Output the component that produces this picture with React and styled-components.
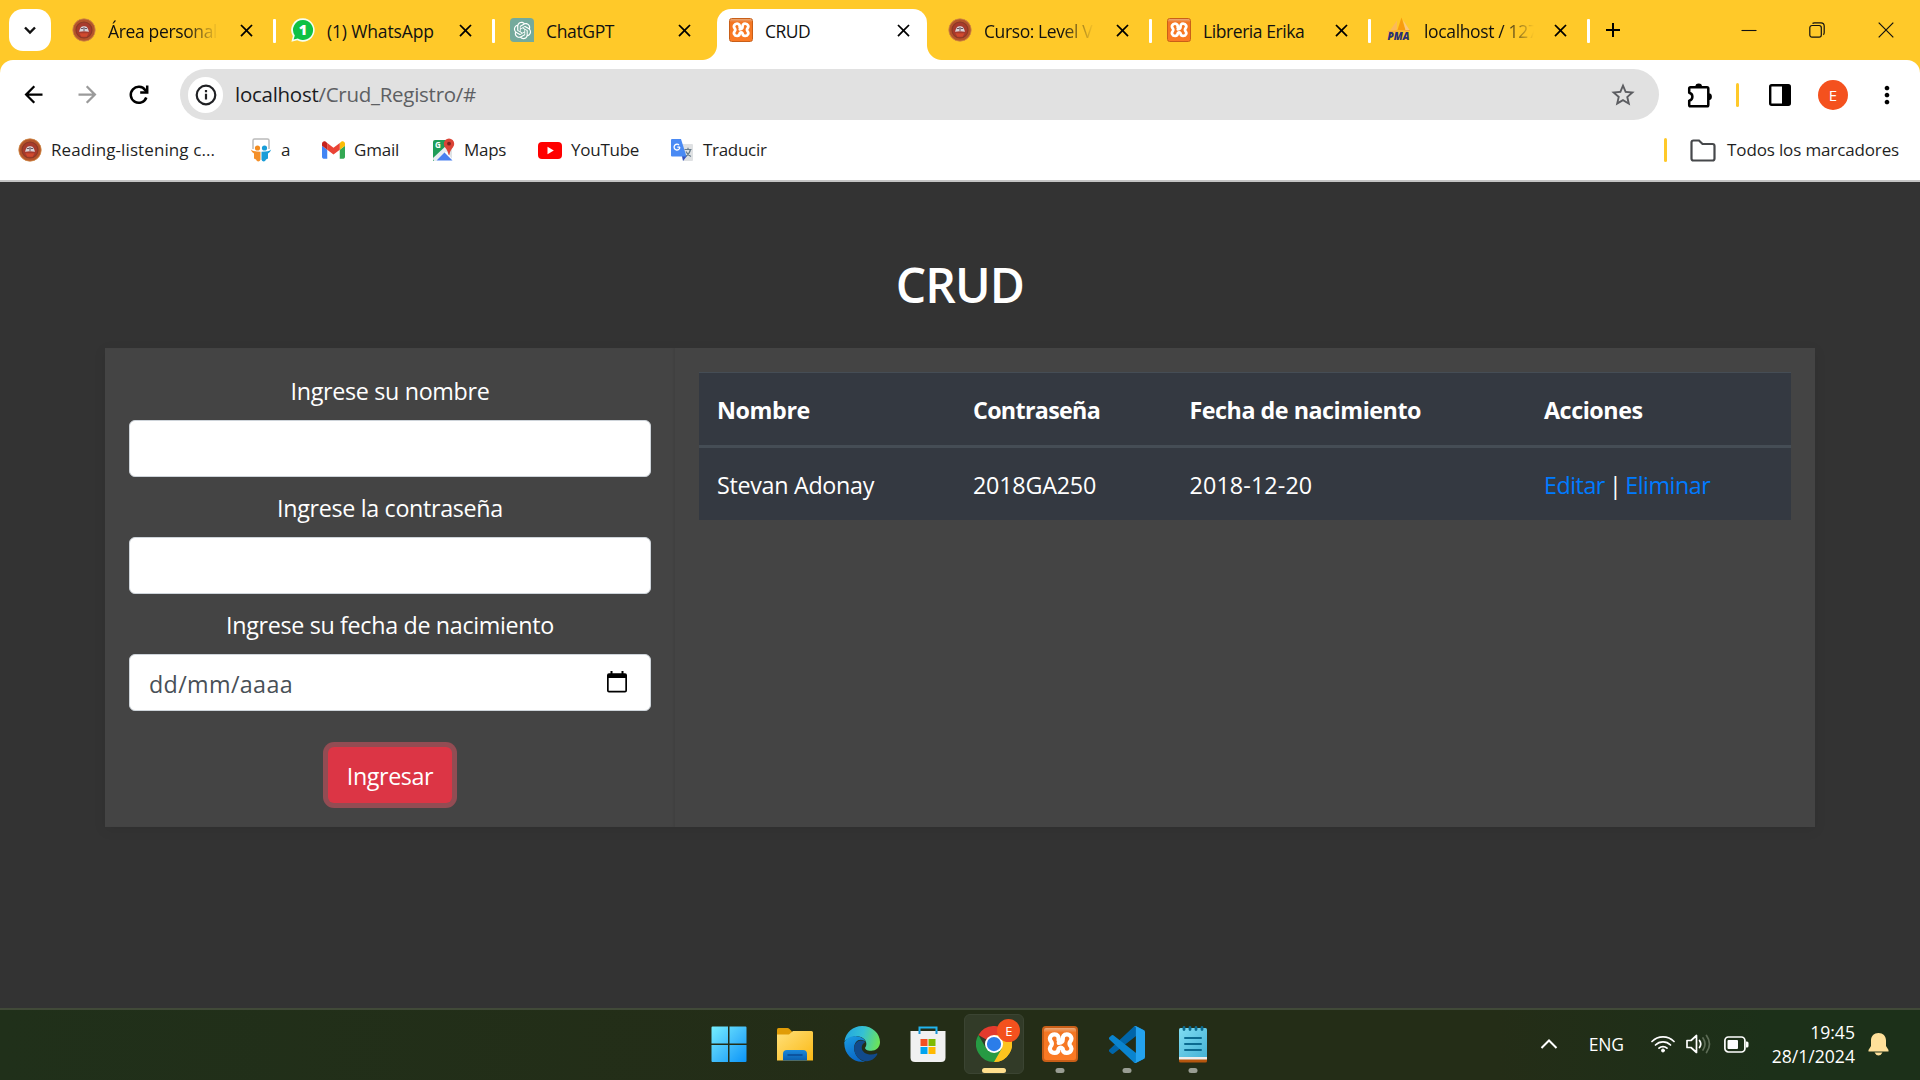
import React from "react";
import styled, { createGlobalStyle, css } from "styled-components";
import {
  MdArrowBack,
  MdArrowForward,
  MdStarBorder,
  MdMoreVert,
  MdClose,
  MdAdd,
} from "react-icons/md";
import { RiOpenaiFill } from "react-icons/ri";

const GlobalStyle = createGlobalStyle`
  *, *::before, *::after { box-sizing: border-box; }
  html, body { margin: 0; padding: 0; background: #333; overflow: hidden; }
  body { font-family: "Open Sans", "Noto Sans", sans-serif; }
  svg { display: block; flex: none; }
`;

const Screen = styled.div`
  width: 1920px;
  height: 1080px;
  display: flex;
  flex-direction: column;
  overflow: hidden;
`;

const Text = styled.span`
  display: block;
  white-space: nowrap;
  font-size: ${(p) => p.$size || 17}px;
  letter-spacing: ${(p) => p.$ls || 0}px;
`;

/* ---------- Tab strip ---------- */

const TabStrip = styled.div`
  height: 60px;
  flex: none;
  display: flex;
  align-items: flex-end;
  background: #ffc929;
  color: #111;
`;

const TabSearch = styled.div`
  width: 42px;
  height: 42px;
  margin: 0 9px 9px 9px;
  border-radius: 14px;
  background: #fff;
  display: flex;
  align-items: center;
  justify-content: center;
`;

const Tab = styled.div`
  position: relative;
  width: 210px;
  height: 51px;
  margin-right: 9px;
  padding: 0 12px 9px 12px;
  display: flex;
  align-items: center;
  flex: none;
  ${(p) =>
    p.$active &&
    css`
      background: #fff;
      border-radius: 14px 14px 0 0;
      &::before,
      &::after {
        content: "";
        position: absolute;
        bottom: 0;
        width: 15px;
        height: 15px;
      }
      &::before {
        left: -15px;
        background: radial-gradient(circle at 0 0, transparent 14.5px, #fff 15.5px);
      }
      &::after {
        right: -15px;
        background: radial-gradient(circle at 100% 0, transparent 14.5px, #fff 15.5px);
      }
    `}
  ${(p) =>
    p.$divided &&
    css`
      &::after {
        content: "";
        position: absolute;
        left: 213px;
        top: 10px;
        width: 3px;
        height: 24px;
        border-radius: 1px;
        background: #fff;
      }
    `}
`;

const TabTitle = styled.div`
  width: 111px;
  height: 28px;
  line-height: 26px;
  margin-left: 12px;
  padding-top: 2px;
  overflow: hidden;
  ${(p) => p.$fade && "mask-image: linear-gradient(90deg, #000 70%, transparent 99%);"}
`;

const TabClose = styled.div`
  margin-left: auto;
  width: 24px;
  display: flex;
  justify-content: center;
`;

const NewTab = styled.div`
  height: 42px;
  margin: 0 0 9px 8px;
  display: flex;
  align-items: center;
`;

const WindowControls = styled.div`
  margin-left: auto;
  height: 60px;
  display: flex;
  align-items: center;
`;

const WindowButton = styled.div`
  width: 68.5px;
  display: flex;
  justify-content: center;
`;

/* ---------- Toolbar ---------- */

const ToolbarShell = styled.div`
  height: 122px;
  flex: none;
  background: #ffc929;
`;

const ToolbarBody = styled.div`
  height: 122px;
  background: #fff;
  border-radius: 13px 13px 0 0;
  border-bottom: 2px solid #c4c4c4;
`;

const AddressRow = styled.div`
  height: 69px;
  display: flex;
  align-items: center;
  padding: 0 19px 0 20px;
`;

const NavButtons = styled.div`
  display: flex;
  align-items: center;
  gap: 27px;
  width: 160px;
  color: #000;
`;

const Omnibox = styled.div`
  width: 1479px;
  height: 51px;
  border-radius: 26px;
  background: #e1e1e1;
  display: flex;
  align-items: center;
  padding: 0 22px 0 8px;
`;

const SiteInfo = styled.div`
  width: 35px;
  height: 36px;
  border-radius: 18px;
  background: #fff;
  display: flex;
  align-items: center;
  justify-content: center;
`;

const Url = styled.div`
  display: flex;
  margin-left: 12px;
  padding-bottom: 2px;
  color: #1b1c1f;
`;

const UrlPath = styled.span`
  color: #5d5f63;
`;

const StarSlot = styled.div`
  margin-left: auto;
  color: #5c5d61;
`;

const ToolbarActions = styled.div`
  margin-left: auto;
  display: flex;
  align-items: center;
`;

const YellowRule = styled.div`
  width: 3px;
  height: 24px;
  border-radius: 1.5px;
  background: #ffc929;
  margin: 0 ${(p) => p.$right}px 0 ${(p) => p.$left || 0}px;
`;

const Avatar = styled.div`
  width: ${(p) => p.$d}px;
  height: ${(p) => p.$d}px;
  border-radius: 50%;
  background: #f4511e;
  color: #fff;
  font-size: ${(p) => p.$font}px;
  display: flex;
  align-items: center;
  justify-content: center;
`;

const AvatarSlot = styled.div`
  margin: 0 25px 0 27px;
`;

const BookmarkRow = styled.div`
  height: 42px;
  display: flex;
  align-items: center;
  padding: 0 21px 0 18px;
  color: #1f1f1f;
`;

const Bookmark = styled.div`
  display: flex;
  align-items: center;
  gap: ${(p) => p.$gap || 9}px;
  width: ${(p) => (p.$w ? `${p.$w}px` : "auto")};
  ${Text} {
    padding-bottom: 2px;
  }
`;

const BookmarksEnd = styled.div`
  margin-left: auto;
  display: flex;
  align-items: center;
`;

/* ---------- Page ---------- */

const Page = styled.main`
  height: 826px;
  flex: none;
  background: #333;
  color: #fff;
  display: flex;
  flex-direction: column;
  align-items: center;
`;

const Heading = styled.h1`
  margin: 72px 0 36px;
  height: 58px;
  line-height: 58px;
  padding-top: 2px;
  font-size: 48px;
  font-weight: 600;
  letter-spacing: -0.9px;
`;

const Card = styled.section`
  width: 1710px;
  height: 479px;
  display: flex;
  background: #444;
  box-shadow: 0 3px 12px rgba(0, 0, 0, 0.08);
`;

const FormColumn = styled.form`
  width: 570px;
  padding: 24px;
  display: flex;
  flex-direction: column;
  box-shadow: inset -2px 0 2px rgba(0, 0, 0, 0.05);
`;

const Label = styled.label`
  height: 36px;
  line-height: 36px;
  padding-top: 1px;
  margin-bottom: 12px;
  text-align: center;
  font-size: 23.3px;
  letter-spacing: -0.33px;
`;

const Field = styled.div`
  height: 57px;
  margin-bottom: 12px;
  padding: 2px 21px 0 19px;
  border: 1px solid #ced4da;
  border-radius: 6px;
  background: #fff;
  color: #495057;
  display: flex;
  justify-content: space-between;
  align-items: center;
`;

const CalendarSlot = styled.div`
  padding: 0 2px 3px 0;
`;

const Submit = styled.button`
  width: 124px;
  height: 56px;
  margin: 24px auto 0;
  padding: 1px 0 0;
  border: 0;
  border-radius: 6px;
  background: #dc3545;
  box-shadow: 0 0 0 5px rgba(225, 83, 97, 0.5);
  color: #fff;
  font: 23.3px "Open Sans", sans-serif;
  letter-spacing: -0.42px;
`;

const TableColumn = styled.div`
  width: 1140px;
  padding: 24px;
`;

const Table = styled.div`
  display: flex;
  flex-direction: column;
  background: #343a40;
  border-top: 1px solid #454d55;
`;

const Row = styled.div`
  display: grid;
  grid-template-columns: 256px 216.5px 354.5px 1fr;
  height: ${(p) => (p.$head ? 75 : 72)}px;
  background: #343941;
  border-bottom: ${(p) => (p.$head ? "3px solid #454d55" : "0")};
  font-weight: ${(p) => (p.$head ? 700 : 400)};
`;

const Cell = styled.div`
  padding: 19px 0 0 18px;
  line-height: 36px;
  font-size: 23.3px;
  letter-spacing: ${(p) => p.$ls}px;
  word-spacing: ${(p) => p.$ws || 0}px;
  white-space: pre;
`;

const Link = styled.span`
  color: #007bff;
`;

/* ---------- Taskbar ---------- */

const Taskbar = styled.footer`
  height: 72px;
  flex: none;
  display: grid;
  grid-template-columns: 696px 530px 1fr;
  border-top: 2px solid #414a38;
  background: linear-gradient(90deg, #20301a 0%, #242d17 45%, #242d17 78%, #1c3019 92%, #1c3019 100%);
  color: #fff;
`;

const Apps = styled.div`
  grid-column: 2;
  display: flex;
`;

const AppSlot = styled.div`
  position: relative;
  width: 66.25px;
  height: 68px;
  display: flex;
  align-items: center;
  justify-content: center;
`;

const AppTile = styled.div`
  width: 60px;
  height: 60px;
  border-radius: 6px;
  display: flex;
  align-items: center;
  justify-content: center;
  ${(p) =>
    p.$active &&
    css`
      background: #323b28;
      border: 1px solid #3b4432;
    `}
`;

const Indicator = styled.div`
  position: absolute;
  left: 50%;
  bottom: 5px;
  width: ${(p) => (p.$active ? 24 : 9)}px;
  height: 5px;
  transform: translateX(-50%);
  border-radius: 3px;
  background: ${(p) => (p.$active ? "#ffdf8e" : "#999d93")};
`;

const BadgeSlot = styled.div`
  position: absolute;
  right: 7px;
  top: 9px;
`;

const Tray = styled.div`
  grid-column: 3;
  display: flex;
  align-items: center;
  justify-content: flex-end;
  padding: 0 31px 2px 0;
`;

const TraySpace = styled.div`
  display: flex;
  margin-right: ${(p) => p.$r}px;
`;

const Clock = styled.div`
  display: flex;
  flex-direction: column;
  align-items: flex-end;
  line-height: 24px;
  margin-right: 13px;
`;

/* ---------- Icons ---------- */

const School = () => (
  <svg width="24" height="24" viewBox="0 0 24 24">
    <circle cx="12" cy="12" r="11.2" fill="#b5542b" stroke="#cf8a45" strokeWidth=".8" />
    <circle cx="12" cy="12" r="8" fill="#a83a2c" stroke="#8c3a26" strokeWidth="1.2" />
    <path d="M7 13.800L8.200 10.200Q9.500 7.800 12 8.300Q14.500 7.800 15.800 10.200L17 13.800L12 13.200z" fill="#d9d3d8" />
    <path d="M8.800 10.500h2.600M12.600 10.500h2.600M12 9v4" stroke="#6b5560" strokeWidth="1" />
    <path d="M7.500 15.200h9l-1.800 3.500H9.300z" fill="#cf4a2e" />
  </svg>
);

const WhatsApp = () => (
  <svg width="24" height="24" viewBox="0 0 24 24">
    <path d="M12 0.300a11.700 11.700 0 1 1-5.800 21.900L.4 23.700l1.500-5.600A11.700 11.700 0 0 1 12 .3z" fill="#f4fff2" />
    <path d="M12 2a10 10 0 1 1-5.200 18.500L2.600 21.500l1.200-3.900A10 10 0 0 1 12 2z" fill="#0fc143" />
    <text x="12" y="17" textAnchor="middle" fontFamily="Open Sans, sans-serif" fontWeight="800" fontSize="14.500" fill="#fff">1</text>
  </svg>
);

const GptTile = styled.div`
  width: 24px;
  height: 24px;
  border-radius: 4px 4px 0 4px;
  background: #74aa9c;
  color: #fff;
  display: flex;
  align-items: center;
  justify-content: center;
`;

const XamppTile = styled.div`
  width: ${(p) => p.$d}px;
  height: ${(p) => p.$d}px;
  border-radius: ${(p) => p.$d / 9}px;
  border: ${(p) => (p.$d > 30 ? 2 : 1)}px solid #c95f18;
  background: linear-gradient(#e9aa7c 0, #f37623 14%, #fb7a24 100%);
  display: flex;
  align-items: center;
  justify-content: center;
`;

const Xampp = ({ d = 24 }) => (
  <XamppTile $d={d}>
    <svg
      width={d * 0.76}
      height={d * 0.65}
      viewBox="0 0 28 24"
      fill="none"
      stroke="#fff"
      strokeWidth="4.3"
      strokeLinejoin="round"
      strokeLinecap="round"
    >
      <path d="M11.800 8.300C12.300 4.500 10.500 2.500 7.800 2.500C3.500 2.500 1.500 7 4.300 10Q5.600 12 4.300 14C1.500 17 3.500 21.500 7.800 21.500C10.500 21.500 11.800 19.500 11.900 17.300Q14 14.600 16.100 17.300C16.200 19.500 17.500 21.500 20.200 21.500C24.500 21.500 26.500 17 23.700 14Q22.400 12 23.700 10C26.500 7 24.500 2.500 20.200 2.500C17.200 2.500 16 4.500 16.200 7.500Q16.200 10.800 12 11.300" />
    </svg>
  </XamppTile>
);

const Pma = () => (
  <svg width="26" height="26" viewBox="0 0 26 26">
    <path d="M11.500 13L15.500 0.500l4 12.500z" fill="#f89c0e" />
    <path d="M4 13.500L11 3.500 10.700 13z" fill="#fbb95c" />
    <path d="M17 3l6.500 10h-4z" fill="#fcc77d" />
    <path d="M2 14.500l22-1" stroke="#f2a33d" strokeWidth="1" />
    <text x="12.500" y="23" textAnchor="middle" textLength="22" lengthAdjust="spacingAndGlyphs" fontFamily="Open Sans, sans-serif" fontWeight="800" fontStyle="italic" fontSize="10" fill="#2b2f74">PMA</text>
  </svg>
);

const Chevron = () => (
  <svg width="16" height="16" viewBox="0 0 16 16" fill="none" stroke="#111" strokeWidth="2.400">
    <path d="M3 5.500l5 5 5-5" />
  </svg>
);

const Reload = () => (
  <svg width="22" height="22" viewBox="0 0 22 22" fill="none" stroke="#000" strokeWidth="2.500">
    <path d="M18.300 13.500A8 8 0 1 1 17.300 6.200L19 8" />
    <path d="M19.200 1.500v7h-7" />
  </svg>
);

const Puzzle = () => (
  <svg width="28" height="28" viewBox="0 0 28 28">
    <path
      d="M5.500 6.200H22Q23.300 6.200 23.300 7.500V24Q23.300 25.300 22 25.300H5.500Q4.200 25.300 4.200 24V19.600Q7.400 18.800 7.400 15.700Q7.400 12.600 4.200 11.800V7.500Q4.200 6.200 5.500 6.200z"
      fill="none"
      stroke="#000"
      strokeWidth="2.500"
      strokeLinejoin="round"
    />
    <path d="M10.300 6a3.400 3.400 0 0 1 6.800 0zM23.500 12.300a3.400 3.400 0 0 1 0 6.800z" />
  </svg>
);

const Info = () => (
  <svg width="22" height="22" viewBox="0 0 22 22" fill="none" stroke="#202124" strokeWidth="2.200">
    <circle cx="11" cy="11" r="9.300" />
    <path d="M11 9.800v5.700M11 6v2.200" />
  </svg>
);

const SidePanel = () => (
  <svg width="22" height="22" viewBox="0 0 22 22">
    <rect x="1.200" y="1.200" width="19.600" height="19.600" rx="1.500" fill="#fff" stroke="#000" strokeWidth="2.400" />
    <path d="M13 1h8v20h-8z" />
  </svg>
);

const Slides = () => (
  <svg width="22" height="24" viewBox="0 0 22 24">
    <path d="M3 11V2.500Q3 1 4.500 1H17.500Q19 1 19 2.500V11" fill="#fff" stroke="#bbb" strokeWidth="1.500" />
    <circle cx="7.500" cy="10" r="2.600" fill="#f38b1e" />
    <circle cx="14.500" cy="10" r="2.600" fill="#189dd8" />
    <path d="M.8 11.500q2 2.200 9.700 2.200v8q-.6 1.800-2.200 1.800T6 21.500l-2-1V15.500Q1.500 14 .8 11.500z" fill="#f4902a" />
    <path d="M21.200 11.500q-2 2.200-9.700 2.200v8q.6 1.800 2.200 1.800T16 21.500l2-1V15.500q2.500-1.500 3.200-4z" fill="#189dd8" />
  </svg>
);

const Gmail = () => (
  <svg width="23" height="18" viewBox="52 42 88 66">
    <path fill="#4285f4" d="M58 108h14V74L52 59v43c0 3.320 2.690 6 6 6" />
    <path fill="#34a853" d="M120 108h14c3.320 0 6-2.690 6-6V59l-20 15" />
    <path fill="#fbbc04" d="M120 48v26l20-15v-8c0-7.420-8.470-11.650-14.400-7.200" />
    <path fill="#ea4335" d="M72 74V48l24 18 24-18v26L96 92" />
    <path fill="#c5221f" d="M52 51v8l20 15V48l-5.600-4.200c-5.940-4.450-14.400-.22-14.400 7.200" />
  </svg>
);

const Maps = () => (
  <svg width="24" height="24" viewBox="0 0 24 24">
    <path d="M1 4q0-2 2-2h12v10L3 23H1z" fill="#1f9d58" />
    <path d="M1 20L17 5l3 3L4 23H2q-1 0-1-3z" fill="#e9edf2" />
    <path d="M4.500 22.500l8-8 8 8z" fill="#4a80f0" />
    <path d="M14 13l6-6v14z" fill="#dfe3e6" />
    <text x="3" y="10" fontFamily="Open Sans, sans-serif" fontWeight="700" fontSize="8" fill="#fff">G</text>
    <path d="M17 .5a5.200 5.200 0 0 1 5.200 5.200c0 4-4.200 5.300-4.700 11h-1c-.5-5.700-4.700-7-4.700-11A5.200 5.200 0 0 1 17 .5z" fill="#db4437" />
    <circle cx="17" cy="5.700" r="1.900" fill="#7b231e" />
  </svg>
);

const YouTube = () => (
  <svg width="24" height="17" viewBox="0 0 24 17">
    <rect width="24" height="17" rx="4" fill="#f00" />
    <path d="M9.500 4.800v7.400l6.300-3.700z" fill="#fff" />
  </svg>
);

const Translate = () => (
  <svg width="24" height="24" viewBox="0 0 24 24">
    <path d="M9 6h13q1 0 1 1v15q0 1-1 1H13z" fill="#dfe1e3" />
    <path d="M12 18h5l-4 5z" fill="#3753bd" />
    <path d="M2 1h9l5.500 17.500H2Q1 18.500 1 17.500V2Q1 1 2 1z" fill="#4a8af4" />
    <path d="M10 9.200H7.300M9.900 9.300A2.900 2.900 0 1 1 9 7" fill="none" stroke="#fff" strokeWidth="1.300" />
    <path d="M14.500 11.500h7M18 9.800v1.700M20.500 11.500q-1 4.500-4.500 6.500M16 13.500q1.500 3.500 5 5" fill="none" stroke="#667b8a" strokeWidth="1.200" />
  </svg>
);

const Folder = () => (
  <svg width="26" height="23" viewBox="0 0 26 23" fill="none" stroke="#46484b" strokeWidth="2.200">
    <path d="M1.500 19.500V3.500q0-2 2-2h5.500l3.500 3.500h10q2 0 2 2v12.500q0 2-2 2h-19q-2 0-2-2z" />
  </svg>
);

const Calendar = () => (
  <svg width="20" height="22" viewBox="0 0 20 22">
    <path d="M3.500 0h2v2.200h9V0h2v2.200H18q2 0 2 2V19.500q0 2-2 2H2q-2 0-2-2V4.200q0-2 2-2h1.500zM1.700 7v12.800h16.600V7z" fill="#000" fillRule="evenodd" />
  </svg>
);

const Minimize = () => (
  <svg width="16" height="16" viewBox="0 0 16 16"><path d="M.5 8.500h15" stroke="#111" strokeWidth="1.100" /></svg>
);
const Restore = () => (
  <svg width="16" height="16" viewBox="0 0 16 16" fill="none" stroke="#111" strokeWidth="1.200">
    <rect x=".8" y="3.500" width="11.500" height="11.700" rx="2.200" />
    <path d="M3.500 1.500Q4.200.8 5.500.8h6.500q3.200 0 3.200 3.200v6.500q0 1.500-.8 2.200" />
  </svg>
);
const CloseWindow = () => (
  <svg width="16" height="16" viewBox="0 0 16 16" stroke="#111" strokeWidth="1.200"><path d="M.7.7l14.600 14.600M15.300.7L.7 15.300" /></svg>
);

const Windows = () => (
  <svg width="36" height="36" viewBox="0 0 36 36">
    <defs>
      <linearGradient id="win" x1="0" y1="0" x2="1" y2="1">
        <stop offset="0" stopColor="#75efff" />
        <stop offset=".5" stopColor="#44bffb" />
        <stop offset="1" stopColor="#0b95f8" />
      </linearGradient>
    </defs>
    <path fill="url(#win)" d="M1.500.5H17v17H.5v-16q0-1 1-1zM18.500.5h16q1 0 1 1v16h-17zM.5 19H17v17H1.500q-1 0-1-1zM18.500 19h17v16q0 1-1 1h-16z" />
  </svg>
);

const Explorer = () => (
  <svg width="36" height="36" viewBox="0 0 36 36">
    <defs>
      <linearGradient id="fold" x1="0" y1="0" x2="1" y2="1">
        <stop offset="0" stopColor="#ffe07a" />
        <stop offset="1" stopColor="#fbb914" />
      </linearGradient>
      <linearGradient id="drawer" x1="0" y1="0" x2="0" y2="1">
        <stop offset="0" stopColor="#1a88dc" />
        <stop offset="1" stopColor="#0c5fae" />
      </linearGradient>
    </defs>
    <path d="M0 3.500Q0 2 1.500 2h9q1 0 2 1l2.500 2.500v4H0z" fill="#e09c07" />
    <path d="M0 8.500h12L16 5h18.500Q36 5 36 6.500V34.500H0z" fill="url(#fold)" />
    <path d="M6 34.500V28q0-4 4-4h16q4 0 4 4v6.500z" fill="url(#drawer)" />
    <path d="M11 29h14" stroke="#0a4a93" strokeWidth="1.500" strokeLinecap="round" />
  </svg>
);

const Edge = () => (
  <svg width="36" height="36" viewBox="0 0 256 256">
    <defs>
      <linearGradient id="edgeA" x1="0" y1=".3" x2="1" y2=".5">
        <stop offset="0" stopColor="#22a5e0" />
        <stop offset=".5" stopColor="#35c1d4" />
        <stop offset="1" stopColor="#6be35a" />
      </linearGradient>
      <linearGradient id="edgeB" x1="0" y1="0" x2=".4" y2="1">
        <stop offset="0" stopColor="#1b9de2" />
        <stop offset="1" stopColor="#0a68c8" />
      </linearGradient>
    </defs>
    <path d="M3 108C14 45 64 0 128 0c76 0 128 55 128 114 0 40-30 62-62 62-35 0-44-13-44-20 0-6 9-9 9-28 0-28-28-55-66-55C55 73 20 93 3 108z" fill="url(#edgeA)" />
    <path d="M2 116C14 91 50 70 88 72c34 1 60 20 69 46-9-14-24-20-38-20-26 0-47 25-47 58 0 50 40 91 78 97C72 266 0 210 2 116z" fill="url(#edgeB)" />
    <path d="M151 116c-19-24-79-14-79 44 0 55 56 105 115 86 24-9 43-30 50-46 2-4-2-7-6-5-48 20-105 0-105-42 0-15 9-29 25-37z" fill="#114a8b" />
  </svg>
);

const Store = () => (
  <svg width="36" height="36" viewBox="0 0 36 36">
    <path d="M9.500 9V1.500h17V9" fill="none" stroke="#20b4ee" strokeWidth="2" />
    <path d="M.5 5h35v26.500q0 4.500-4.500 4.500H5Q.5 36 .5 31.500z" fill="#f1f1f1" />
    <path d="M9.500 5v3M26.500 5v3" stroke="#1593d6" strokeWidth="2" />
    <path d="M10.500 13h7v7h-7z" fill="#f25022" />
    <path d="M18.500 13h7v7h-7z" fill="#7fba00" />
    <path d="M10.500 21h7v7h-7z" fill="#00a4ef" />
    <path d="M18.500 21h7v7h-7z" fill="#ffb900" />
  </svg>
);

const Chrome = () => (
  <svg width="36" height="36" viewBox="0 0 48 48">
    <path d="M24 24L3.200 12A24 24 0 0 1 44.800 12z" fill="#e33b2e" />
    <path d="M24 24l20.800-12A24 24 0 0 1 24 48z" fill="#fcc31e" />
    <path d="M24 12h20.800A24 24 0 0 1 24 48l10.400-18z" fill="#fcc31e" />
    <path d="M24 48A24 24 0 0 1 3.200 12L13.600 30 24 36l10.400-6z" fill="#269a43" />
    <circle cx="24" cy="24" r="12" fill="#fff" />
    <circle cx="24" cy="24" r="9.500" fill="#2b7de9" />
  </svg>
);

const VsCode = () => (
  <svg width="36" height="37" viewBox="0 0 100 100" preserveAspectRatio="none">
    <path d="M96 11L75.500 1a6 6 0 0 0-7 1.200L1.300 63.500a4 4 0 0 0 0 6l5.500 5a4 4 0 0 0 5.300.2L93 13.400c3-2 7 0 7 3.300v-.3a6 6 0 0 0-4-5.400z" fill="#0065a9" />
    <path d="M96 89L75.500 99a6 6 0 0 1-7-1.200L1.300 36.500a4 4 0 0 1 0-6l5.500-5a4 4 0 0 1 5.300-.2L93 86.600c3 2 7 0 7-3.300v.3a6 6 0 0 1-4 5.400z" fill="#0a84cf" />
    <path d="M75.500 99a6 6 0 0 1-7-1.200c2.300 2.300 6.200.7 6.200-2.600V4.800c0-3.300-4-4.900-6.200-2.600a6 6 0 0 1 7-1.200L96 10.900a6 6 0 0 1 4 5.600v67a6 6 0 0 1-4 5.600z" fill="#24a2ee" />
  </svg>
);

const Notepad = () => (
  <svg width="28" height="37" viewBox="0 0 28 37">
    <defs>
      <linearGradient id="note" x1="0" y1="0" x2="1" y2="1">
        <stop offset="0" stopColor="#7fdcf2" />
        <stop offset="1" stopColor="#45b2d6" />
      </linearGradient>
    </defs>
    <path d="M0 31h28v4q0 1.500-1.500 1.500h-25Q0 36.500 0 35z" fill="#b5560e" />
    <path d="M0 29h28v4.500H0z" fill="#ededed" />
    <path d="M0 3.500Q0 2 1.500 2h25Q28 2 28 3.500V31H0z" fill="url(#note)" />
    <path d="M5 1.500v2M11 1.500v2M17 1.500v2M23 1.500v2" stroke="#0d6a8e" strokeWidth="2.800" strokeLinecap="round" />
    <path d="M6 12h16M6 18h16M6 24h16" stroke="#0b6a90" strokeWidth="2" strokeLinecap="round" />
  </svg>
);

const TrayChevron = () => (
  <svg width="18" height="12" viewBox="0 0 18 12" fill="none" stroke="#fff" strokeWidth="2"><path d="M1.500 10L9 2.500l7.500 7.500" /></svg>
);
const Wifi = () => (
  <svg width="24" height="18" viewBox="0 0 24 18" fill="none" stroke="#fff" strokeWidth="1.700" strokeLinecap="round">
    <path d="M1 6.500a15.500 15.500 0 0 1 22 0M4.500 10a10.600 10.600 0 0 1 15 0M8 13.200a5.700 5.700 0 0 1 8 0" />
    <circle cx="12" cy="15.500" r="1.500" fill="#fff" strokeWidth="1" />
  </svg>
);
const Volume = () => (
  <svg width="25" height="20" viewBox="0 0 25 20" fill="none" stroke="#fff" strokeWidth="1.700" strokeLinejoin="round" strokeLinecap="round">
    <path d="M1 6.500h4l5.500-5v17l-5.500-5H1z" />
    <path d="M13.500 6.500q2.500 3.500 0 7" />
    <path d="M17 4q4 6 0 12M20.500 1.500q6 8.500 0 17" stroke="#5d6c56" />
  </svg>
);
const Battery = () => (
  <svg width="25" height="17" viewBox="0 0 25 17">
    <rect x=".9" y="1" width="20" height="15" rx="3.500" fill="none" stroke="#fff" strokeWidth="1.700" />
    <rect x="3.500" y="4" width="10.500" height="9" rx="1" fill="#fff" />
    <path d="M22 5.500h1q1.500 0 1.500 1.500v3q0 1.500-1.500 1.500h-1z" fill="#fff" />
  </svg>
);
const Bell = () => (
  <svg width="21" height="24" viewBox="0 0 21 24" fill="#ffe09a">
    <path d="M10.500 1c4.500 0 7.500 3 7.500 7.500v5.500l2.500 4v1.500H.5V18l2.500-4V8.500C3 4 6 1 10.500 1zM6.500 20.500h8q-1.500 3-4 3t-4-3z" />
  </svg>
);

/* ---------- Data ---------- */

const TABS = [
  { title: "Área personal", icon: <School />, divided: true, fade: true, ls: -0.35 },
  { title: "(1) WhatsApp", icon: <WhatsApp />, divided: true, ls: -0.15 },
  { title: "ChatGPT", icon: <GptTile><RiOpenaiFill size={21} /></GptTile>, ls: -0.35 },
  { title: "CRUD", icon: <Xampp />, active: true, ls: -0.5 },
  { title: "Curso: Level VI", icon: <School />, divided: true, fade: true, ls: -0.4 },
  { title: "Libreria Erika", icon: <Xampp />, divided: true, ls: -0.42 },
  { title: "localhost / 127", icon: <Pma />, divided: true, fade: true, ls: -0.35 },
];

const BOOKMARKS = [
  { title: "Reading-listening c...", icon: <School />, w: 232, gap: 9, ls: 0.1 },
  { title: "a", icon: <Slides />, w: 72 },
  { title: "Gmail", icon: <Gmail />, w: 110, ls: -0.2 },
  { title: "Maps", icon: <Maps />, w: 106, gap: 8, ls: -0.3 },
  { title: "YouTube", icon: <YouTube />, w: 132, ls: -0.25 },
  { title: "Traducir", icon: <Translate />, ls: -0.3 },
];

const FIELDS = ["Ingrese su nombre", "Ingrese la contraseña", "Ingrese su fecha de nacimiento"];

const APPS = [
  { name: "windows", icon: <Windows /> },
  { name: "explorer", icon: <Explorer /> },
  { name: "edge", icon: <Edge /> },
  { name: "store", icon: <Store /> },
  { name: "chrome", icon: <Chrome />, active: true, open: true },
  { name: "xampp", icon: <Xampp d={36} />, open: true },
  { name: "vscode", icon: <VsCode />, open: true },
  { name: "notepad", icon: <Notepad />, open: true },
];

export default function App() {
  return (
    <Screen>
      <GlobalStyle />
      <TabStrip>
        <TabSearch><Chevron /></TabSearch>
        {TABS.map((t) => (
          <Tab key={t.title} $active={t.active} $divided={t.divided}>
            {t.icon}
            <TabTitle $fade={t.fade}><Text $size={17.5} $ls={t.ls}>{t.title}</Text></TabTitle>
            <TabClose><MdClose size={21} color="#000" /></TabClose>
          </Tab>
        ))}
        <NewTab><MdAdd size={24} color="#000" /></NewTab>
        <WindowControls>
          <WindowButton><Minimize /></WindowButton>
          <WindowButton><Restore /></WindowButton>
          <WindowButton><CloseWindow /></WindowButton>
        </WindowControls>
      </TabStrip>

      <ToolbarShell>
        <ToolbarBody>
          <AddressRow>
            <NavButtons>
              <MdArrowBack size={27} />
              <MdArrowForward size={27} color="#9a9a9a" />
              <Reload />
            </NavButtons>
            <Omnibox>
              <SiteInfo><Info /></SiteInfo>
              <Url>
                <Text $size={20.5} $ls={-0.27}>localhost<UrlPath>/Crud_Registro/#</UrlPath></Text>
              </Url>
              <StarSlot><MdStarBorder size={28} /></StarSlot>
            </Omnibox>
            <ToolbarActions>
              <Puzzle />
              <YellowRule $left={23} $right={30} />
              <SidePanel />
              <AvatarSlot><Avatar $d={30} $font={15}>E</Avatar></AvatarSlot>
              <MdMoreVert size={28} />
            </ToolbarActions>
          </AddressRow>
          <BookmarkRow>
            {BOOKMARKS.map((b) => (
              <Bookmark key={b.title} $w={b.w} $gap={b.gap}>
                {b.icon}
                <Text $ls={b.ls}>{b.title}</Text>
              </Bookmark>
            ))}
            <BookmarksEnd>
              <YellowRule $right={23} />
              <Bookmark $gap={11}>
                <Folder />
                <Text $ls={-0.14}>Todos los marcadores</Text>
              </Bookmark>
            </BookmarksEnd>
          </BookmarkRow>
        </ToolbarBody>
      </ToolbarShell>

      <Page>
        <Heading>CRUD</Heading>
        <Card>
          <FormColumn>
            {FIELDS.map((label, i) => (
              <React.Fragment key={label}>
                <Label>{label}</Label>
                <Field>
                  {i === 2 && (
                    <>
                      <Text $size={23.3} $ls={0.35}>dd/mm/aaaa</Text>
                      <CalendarSlot><Calendar /></CalendarSlot>
                    </>
                  )}
                </Field>
              </React.Fragment>
            ))}
            <Submit type="button">Ingresar</Submit>
          </FormColumn>
          <TableColumn>
            <Table>
              <Row $head>
                <Cell $ls={-0.4}>Nombre</Cell>
                <Cell $ls={-0.7}>Contraseña</Cell>
                <Cell $ls={-0.48}>Fecha de nacimiento</Cell>
                <Cell $ls={-0.45}>Acciones</Cell>
              </Row>
              <Row>
                <Cell $ls={-0.3}>Stevan Adonay</Cell>
                <Cell $ls={-0.2}>2018GA250</Cell>
                <Cell $ls={0.12}>2018-12-20</Cell>
                <Cell $ls={-0.5} $ws={-1.5}><Link>Editar</Link> | <Link>Eliminar</Link></Cell>
              </Row>
            </Table>
          </TableColumn>
        </Card>
      </Page>

      <Taskbar>
        <Apps>
          {APPS.map((a) => (
            <AppSlot key={a.name}>
              <AppTile $active={a.active}>{a.icon}</AppTile>
              {a.active && <BadgeSlot><Avatar $d={23} $font={13}>E</Avatar></BadgeSlot>}
              {a.open && <Indicator $active={a.active} />}
            </AppSlot>
          ))}
        </Apps>
        <Tray>
          <TraySpace $r={31}><TrayChevron /></TraySpace>
          <TraySpace $r={27}><Text $size={17.5} $ls={-0.2}>ENG</Text></TraySpace>
          <TraySpace $r={11}><Wifi /></TraySpace>
          <TraySpace $r={13}><Volume /></TraySpace>
          <TraySpace $r={23}><Battery /></TraySpace>
          <Clock>
            <Text $size={17.6} $ls={0}>19:45</Text>
            <Text $size={17.6} $ls={0}>28/1/2024</Text>
          </Clock>
          <Bell />
        </Tray>
      </Taskbar>
    </Screen>
  );
}
